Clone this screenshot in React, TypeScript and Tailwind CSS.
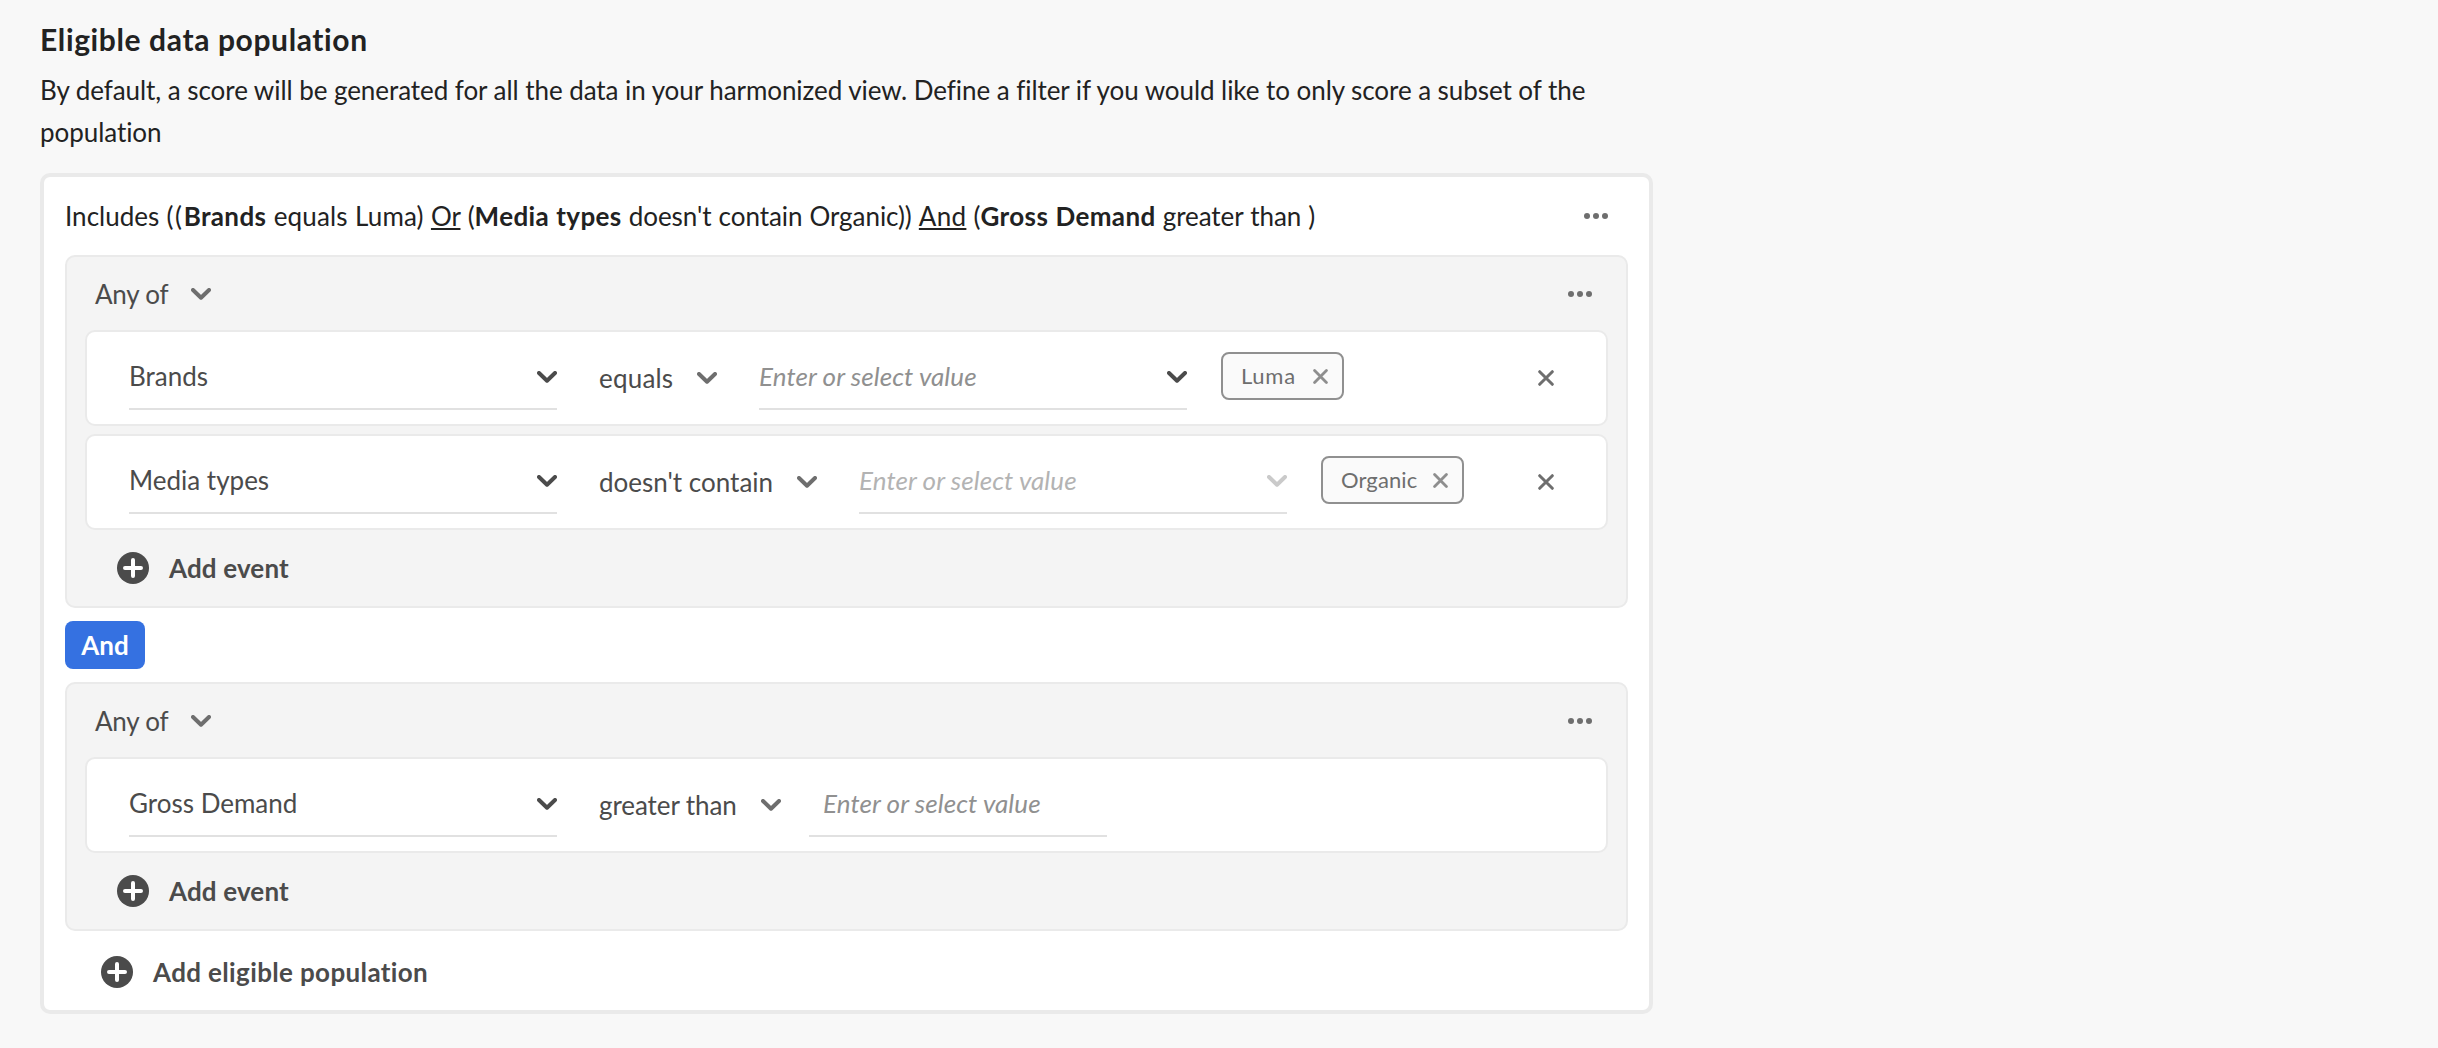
import type { ReactNode } from "react";

function Chevron({ className }: { className: string }) {
  return (
    <svg viewBox="0 0 20 12" className={`h-3 w-5 shrink-0 ${className}`} fill="none" stroke="currentColor" strokeWidth="4" strokeLinecap="round" strokeLinejoin="round">
      <path d="M2 2 10 9.7 18 2" />
    </svg>
  );
}

function Cross({ className }: { className: string }) {
  return (
    <svg viewBox="0 0 16 16" className={`shrink-0 ${className}`} fill="none" stroke="currentColor" strokeWidth="3" strokeLinecap="round">
      <path d="M1.7 1.7 14.3 14.3M14.3 1.7 1.7 14.3" />
    </svg>
  );
}

function More() {
  return (
    <svg viewBox="0 0 24 6" className="h-1.5 w-6 shrink-0 fill-[#6e6e6e]">
      <circle cx="3" cy="3" r="3" />
      <circle cx="12" cy="3" r="3" />
      <circle cx="21" cy="3" r="3" />
    </svg>
  );
}

function AddButton({ label, className }: { label: string; className: string }) {
  return (
    <button className={`flex items-center gap-5 font-bold text-[#4b4b4b] ${className}`}>
      <svg viewBox="0 0 32 32" className="size-8" fill="none">
        <circle cx="16" cy="16" r="16" fill="#4b4b4b" />
        <path d="M16 8v16M8 16h16" stroke="#fff" strokeWidth="4" strokeLinecap="round" />
      </svg>
      {label}
    </button>
  );
}

function Group({ children }: { children: ReactNode }) {
  return (
    <section className="rounded-[10px] border-2 border-[#eaeaea] bg-[#f4f4f4] px-[18px]">
      <header className="flex h-[73px] items-center justify-between pt-px pr-4 pl-2.5">
        <button className="flex items-center text-[#4b4b4b]">
          <span className="w-24 text-left tracking-[-0.2px]">Any of</span>
          <Chevron className="text-[#6e6e6e]" />
        </button>
        <More />
      </header>
      <div className="flex flex-col gap-2">{children}</div>
      <div className="flex h-[76px] items-center pl-8">
        <AddButton label="Add event" className="tracking-[0.15px]" />
      </div>
    </section>
  );
}

function Rule({
  field,
  operator,
  operatorWidth,
  children,
}: {
  field: string;
  operator: string;
  operatorWidth: string;
  children: ReactNode;
}) {
  return (
    <div className="flex h-24 items-center rounded-[10px] border-2 border-[#eaeaea] bg-white pl-[42px] text-[#4b4b4b]">
      <div className="mt-3 flex h-[66px] w-[428px] items-center justify-between self-start border-b-2 border-[#e1e1e1]">
        <span>{field}</span>
        <Chevron className="mt-0.5 text-[#4b4b4b]" />
      </div>
      <button className="ml-[42px] flex items-center">
        <span className={`text-left ${operatorWidth}`}>{operator}</span>
        <Chevron className="text-[#6e6e6e]" />
      </button>
      {children}
    </div>
  );
}

function ValuePicker({ textColor, chevronColor }: { textColor: string; chevronColor: string }) {
  return (
    <div className="mt-3 ml-[42px] flex h-[66px] w-[428px] items-center justify-between self-start border-b-2 border-[#e1e1e1]">
      <span className={`tracking-[0.08px] italic ${textColor}`}>Enter or select value</span>
      <Chevron className={`mt-0.5 ${chevronColor}`} />
    </div>
  );
}

function Tag({ label, className }: { label: string; className: string }) {
  return (
    <div className={`mt-5 ml-[34px] flex h-12 items-center justify-between self-start rounded-lg border-2 border-[#909090] bg-[#fafafa] pr-3.5 pl-[18px] text-[22px] text-[#6e6e6e] ${className}`}>
      {label}
      <Cross className="size-[15px] text-[#8e8e8e]" />
    </div>
  );
}

export default function App() {
  return (
    <main className="h-[1048px] bg-[#f8f8f8] px-10 pt-5 font-['Lato',sans-serif] text-[26px] leading-[42px] text-[#222]">
      <h1 className="text-[30px] leading-[38px] font-bold tracking-[0.62px]">Eligible data population</h1>
      <p className="mt-[11px] w-[1600px] tracking-[-0.06px]">
        By default, a score will be generated for all the data in your harmonized view. Define a filter if you would like to only score a subset of the population
      </p>
      <div className="mt-5 w-[1613px] rounded-[10px] border-4 border-[#eaeaea] bg-white px-[21px]">
        <div className="flex h-[78px] items-center justify-between pr-5">
          <p className="tracking-[0.02px] whitespace-pre [word-spacing:0.5px] [&_b]:tracking-[0.38px]">
            Includes <span className="tracking-[1.6px]">((</span><b>Brands</b><span className="tracking-[0.15px]"> equals Luma) </span><span className="underline">Or</span> (<b>Media types</b><span className="tracking-[-0.06px]"> doesn't contain Organic)) </span><span className="tracking-[0.3px] underline">And</span> (<b>Gross Demand</b><span className="tracking-[-0.06px]"> greater than )</span>
          </p>
          <More />
        </div>
        <Group>
          <Rule field="Brands" operator="equals" operatorWidth="w-[98px] tracking-[0.2px]">
            <ValuePicker textColor="text-[#909090]" chevronColor="text-[#4b4b4b]" />
            <Tag label="Luma" className="w-[123px] tracking-[0.7px]" />
            <Cross className="mr-[52px] ml-auto size-4 text-[#6e6e6e]" />
          </Rule>
          <Rule field="Media types" operator="doesn't contain" operatorWidth="w-[198px]">
            <ValuePicker textColor="text-[#b3b3b3]" chevronColor="text-[#cacaca]" />
            <Tag label="Organic" className="w-[143px] tracking-[0.1px]" />
            <Cross className="mr-[52px] ml-auto size-4 text-[#6e6e6e]" />
          </Rule>
        </Group>
        <button className="my-[13px] block h-12 w-20 rounded-lg bg-[#3571e1] font-bold text-white">And</button>
        <Group>
          <Rule field="Gross Demand" operator="greater than" operatorWidth="w-[162px] tracking-[-0.08px]">
            <div className="mt-3 ml-7 flex h-[66px] w-[298px] items-center self-start border-b-2 border-[#e1e1e1] pl-3.5">
              <span className="tracking-[0.08px] text-[#909090] italic">Enter or select value</span>
            </div>
          </Rule>
        </Group>
        <div className="flex h-[79px] items-center pt-[3px] pl-9">
          <AddButton label="Add eligible population" className="tracking-[0.36px]" />
        </div>
      </div>
    </main>
  );
}
